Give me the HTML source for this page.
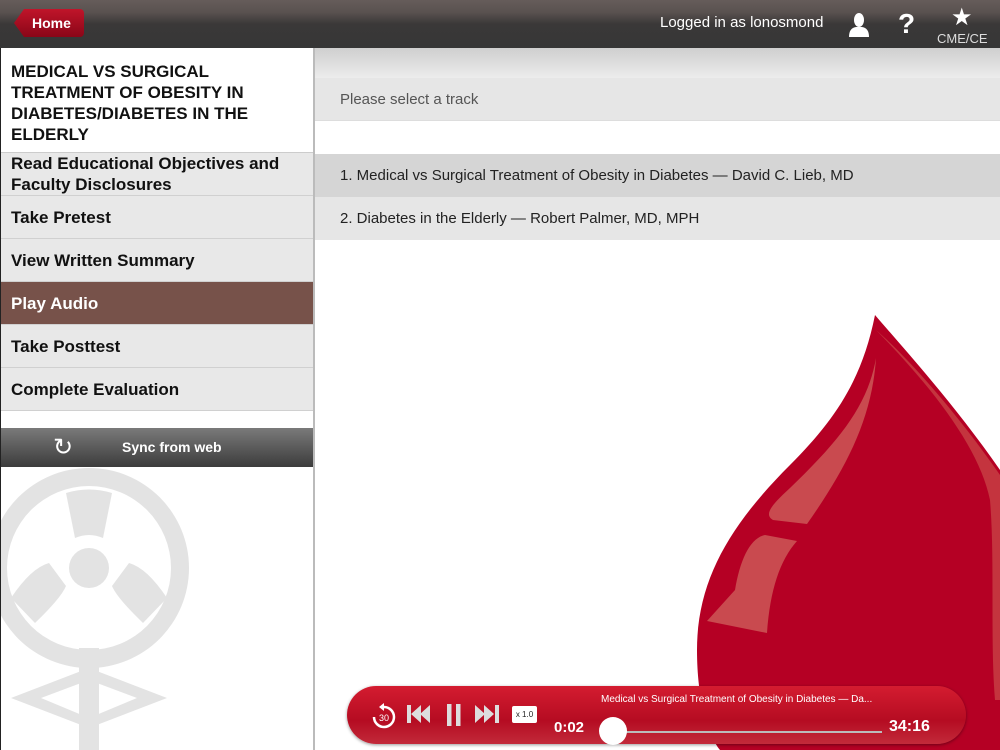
<!DOCTYPE html>
<html><head><meta charset="utf-8"><style>
*{margin:0;padding:0;box-sizing:border-box}
body{width:1000px;height:750px;overflow:hidden;font-family:"Liberation Sans",sans-serif;background:#fff;position:relative}
.top{position:absolute;left:0;top:0;width:1000px;height:48px;background:linear-gradient(#665c5a 0,#5a5250 12px,#3a3838 24px,#363636 48px);z-index:3}
.home{position:absolute;left:14px;top:9px;width:70px;height:28px;background:linear-gradient(#c0152a,#8a0618);border-radius:4px;clip-path:polygon(10px 0,100% 0,100% 100%,10px 100%,0 50%);color:#fff;font-weight:bold;font-size:14px;line-height:28px;padding-left:18px}
.tt{position:absolute;color:#fff;font-size:15px}
.left{position:absolute;left:0;top:48px;width:313px;height:702px;border-left:1px solid #222;background:#fff;overflow:hidden;z-index:2}
.title{height:105px;padding:13px 10px 0;font-size:17px;font-weight:bold;line-height:21px;color:#111;border-bottom:1px solid #ccc}
.mi{height:43px;background:#e8e8e8;border-bottom:1px solid #d0d0d0;font-size:17px;font-weight:bold;color:#111;padding:0 10px;display:flex;align-items:center;line-height:21px}
.mi.act{background:#77524a;color:#fff}
.sync{position:absolute;top:380px;left:0;width:312px;height:39px;background:linear-gradient(#7a7a7a,#3c3c3c);color:#fff;font-size:14px;font-weight:bold}
.right{position:absolute;left:313px;top:48px;width:687px;height:702px;background:#fff;border-left:2px solid #bbb}
.row{position:absolute;left:0;width:687px;height:43px;font-size:15px;color:#222;padding-left:25px;line-height:43px}
.player{position:absolute;left:347px;top:686px;width:619px;height:58px;border-radius:29px;background:linear-gradient(#d41c30,#b50c22 60%,#c22a3a);box-shadow:0 1px 3px rgba(0,0,0,.4);z-index:4}
</style></head><body>
<div class="top">
<div class="home">Home</div>
<div class="tt" style="left:660px;top:14px">Logged in as lonosmond</div>
<svg style="position:absolute;left:846px;top:12px" width="26" height="26" viewBox="0 0 26 26"><ellipse cx="13" cy="8" rx="5" ry="7" fill="#fff"/><path d="M3 25 Q3 16 10 15 L16 15 Q23 16 23 25Z" fill="#fff"/></svg>
<div class="tt" style="left:898px;top:8px;font-size:28px;font-weight:bold">?</div>
<div class="tt" style="left:951px;top:3px;font-size:24px">★</div>
<div class="tt" style="left:937px;top:31px;font-size:13px;color:#ddd">CME/CE</div>
</div>
<div class="left">
<svg style="position:absolute;left:-10px;top:420px" width="220" height="290" viewBox="0 0 220 290"><g fill="#e3e3e3"><circle cx="98" cy="100" r="100"/></g><circle cx="98" cy="100" r="82" fill="#fff"/><g fill="#e3e3e3"><circle cx="98" cy="100" r="20"/><path d="M75 25 Q98 18 121 25 L112 70 Q98 64 84 70Z"/><path d="M20 130 Q40 100 58 95 L75 118 Q70 130 44 155Z"/><path d="M176 130 Q156 100 138 95 L121 118 Q126 130 152 155Z"/><rect x="88" y="180" width="20" height="110"/><path d="M20 230 L98 200 L176 230 L98 260Z M50 230 L98 250 L146 230 L98 212Z" fill-rule="evenodd"/></g></svg>
<div class="title">MEDICAL VS SURGICAL TREATMENT OF OBESITY IN DIABETES/DIABETES IN THE ELDERLY</div>
<div class="mi">Read Educational Objectives and Faculty Disclosures</div>
<div class="mi">Take Pretest</div>
<div class="mi">View Written Summary</div>
<div class="mi act">Play Audio</div>
<div class="mi">Take Posttest</div>
<div class="mi">Complete Evaluation</div>
<div class="sync"><span style="position:absolute;left:52px;top:5px;font-size:24px;font-weight:normal">↻</span><span style="position:absolute;left:121px;top:11px">Sync from web</span></div>
</div>
<div class="right">
<div style="position:absolute;left:0;top:0;width:687px;height:30px;background:linear-gradient(#cfcfcf,#ececec)"></div>
<div class="row" style="top:30px;background:#e6e6e6;color:#555;border-bottom:1px solid #ddd">Please select a track</div>
<div class="row" style="top:106px;background:#d5d5d5">1. Medical vs Surgical Treatment of Obesity in Diabetes — David C. Lieb, MD</div>
<div class="row" style="top:149px;background:#e6e6e6">2. Diabetes in the Elderly — Robert Palmer, MD, MPH</div>
</div>
<svg style="position:absolute;left:0;top:0;z-index:1" width="1000" height="750" viewBox="0 0 1000 750">
<path d="M875 315 C862 380 835 420 790 465 C730 525 697 580 697 650 C697 700 708 735 720 750 L1000 750 L1000 470 C955 405 905 350 875 315Z" fill="#b50024"/>
<path d="M876 330 C935 390 980 450 990 500 C995 560 990 640 995 700 L1000 700 L1000 475 C955 410 905 355 876 330Z" fill="#c4343e"/>
<path d="M876 358 C872 420 845 470 807 524 L773 520 C765 515 768 508 790 488 C840 440 868 405 876 358Z" fill="#c94a4f"/>
<path d="M797 541 L765 535 C750 538 740 560 735 590 L707 621 L767 633 C770 590 780 560 797 541Z" fill="#c94a4f"/>
</svg>
<div class="player">
<svg style="position:absolute;left:24px;top:16px" width="26" height="28" viewBox="0 0 26 28"><path d="M13 5 A10 10 0 1 1 3 15" fill="none" stroke="#fff" stroke-width="2.5"/><path d="M13 1 L8 5 L13 9Z" fill="#fff"/><text x="13" y="19" font-size="9" fill="#fff" text-anchor="middle" font-family="Liberation Sans">30</text></svg>
<svg style="position:absolute;left:60px;top:18px" width="26" height="20"><rect x="0" y="1" width="4" height="18" fill="#ddd"/><path d="M4 10 L14 1 V19Z M13 10 L23 1 V19Z" fill="#ddd"/></svg>
<svg style="position:absolute;left:99px;top:18px" width="16" height="22"><rect x="1" y="0" width="4.5" height="22" fill="#ddd"/><rect x="10" y="0" width="4.5" height="22" fill="#ddd"/></svg>
<svg style="position:absolute;left:128px;top:18px" width="26" height="20"><path d="M0 1 L10 10 L0 19Z M9 1 L19 10 L9 19Z" fill="#ddd"/><rect x="20" y="1" width="4" height="18" fill="#ddd"/></svg>
<div style="position:absolute;left:165px;top:20px;width:25px;height:17px;background:#fff;border-radius:2px;font-size:8px;line-height:17px;text-align:center;color:#222">x 1.0</div>
<div style="position:absolute;left:254px;top:8px;color:#fff;font-size:10px">Medical vs Surgical Treatment of Obesity in Diabetes — Da...</div>
<div style="position:absolute;left:207px;top:33px;color:#fff;font-size:15px;font-weight:bold">0:02</div>
<div style="position:absolute;left:265px;top:45px;width:270px;height:2px;background:#bbb"></div>
<div style="position:absolute;left:252px;top:31px;width:28px;height:28px;border-radius:50%;background:#fff"></div>
<div style="position:absolute;left:542px;top:32px;color:#fff;font-size:16px;font-weight:bold">34:16</div>
</div>
</body></html>
